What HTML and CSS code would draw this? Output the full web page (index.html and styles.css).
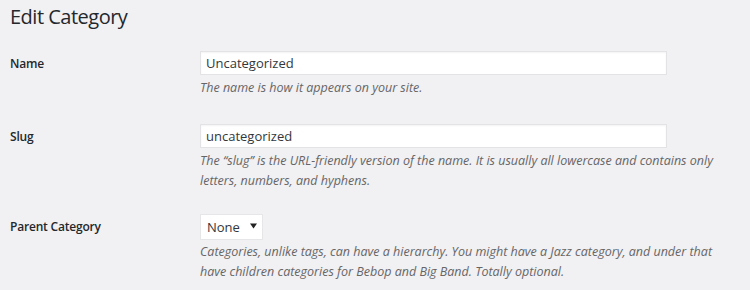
FILE: index.html
```html
<!DOCTYPE html>
<html lang="en">
<head>
<meta charset="utf-8">
<title>Edit Category</title>
<link rel="stylesheet" href="styles.css">
</head>
<body>
<div class="wrap">
  <h1 class="title">Edit Category</h1>
  <div class="form">
    <div class="row row-name">
      <label class="label" for="name">Name</label>
      <div class="field">
        <input class="text" id="name" type="text" value="Uncategorized">
        <p class="desc">The name is how it appears on your site.</p>
      </div>
    </div>
    <div class="row row-slug">
      <label class="label" for="slug">Slug</label>
      <div class="field">
        <input class="text" id="slug" type="text" value="uncategorized">
        <p class="desc">The “slug” is the URL-friendly version of the name. It is usually all lowercase and contains only letters, numbers, and hyphens.</p>
      </div>
    </div>
    <div class="row row-parent">
      <label class="label">Parent Category</label>
      <div class="field">
        <div class="select"><span class="select-value">None</span><svg class="caret" width="7" height="6" viewBox="0 0 7 6"><path d="M0 0.5h7L3.5 5.5z" fill="#222"/></svg></div>
        <p class="desc desc-parent">Categories, unlike tags, can have a hierarchy. You might have a Jazz category, and under that have children categories for Bebop and Big Band. Totally optional.</p>
      </div>
    </div>
  </div>
</div>
</body>
</html>
```
FILE: styles.css
```css
html, body {
  margin: 0;
  padding: 0;
  background: #f1f0f3;
}
body {
  font-family: "Open Sans", "Noto Sans", sans-serif;
  color: #23282d;
  width: 750px;
  height: 290px;
  overflow: hidden;
}
.wrap {
  padding: 0 10px;
}
.title {
  margin: 0;
  padding-top: 2px;
  font-size: 20px;
  line-height: 29px;
  font-weight: 400;
  letter-spacing: -0.5px;
  color: #23282d;
}
.form {
  display: flex;
  flex-direction: column;
  margin-top: 20px;
}
.row {
  display: grid;
  grid-template-columns: 190px 1fr;
}
.row-slug { margin-top: 26px; }
.row-parent { margin-top: 23px; }
.label {
  font-size: 12px;
  font-weight: 600;
  letter-spacing: -0.2px;
  line-height: 25px;
  color: #23282d;
}
.row-parent .label { line-height: 26px; }
.field {
  display: flex;
  flex-direction: column;
  align-items: flex-start;
}
.text {
  box-sizing: border-box;
  width: 467px;
  height: 24px;
  margin: 0;
  padding: 0 5px;
  border: 1px solid #e3e3e6;
  background: #fff;
  box-shadow: inset 0 1px 2px rgba(0, 0, 0, 0.05);
  font-family: "Open Sans", "Noto Sans", sans-serif;
  font-size: 13px;
  color: #32373c;
  outline: none;
}
.desc {
  margin: 3px 0 0;
  font-size: 12.5px;
  line-height: 20px;
  font-style: italic;
  color: #666;
  max-width: 515px;
}
.desc-parent { margin-top: 2px; }
.select {
  box-sizing: border-box;
  width: 63px;
  height: 26px;
  display: flex;
  align-items: center;
  justify-content: space-between;
  padding: 0 5px 0 6px;
  border: 1px solid #e6e6e9;
  background: #fff;
  font-size: 13px;
  color: #32373c;
}
.caret { margin-top: -3px; }
```
